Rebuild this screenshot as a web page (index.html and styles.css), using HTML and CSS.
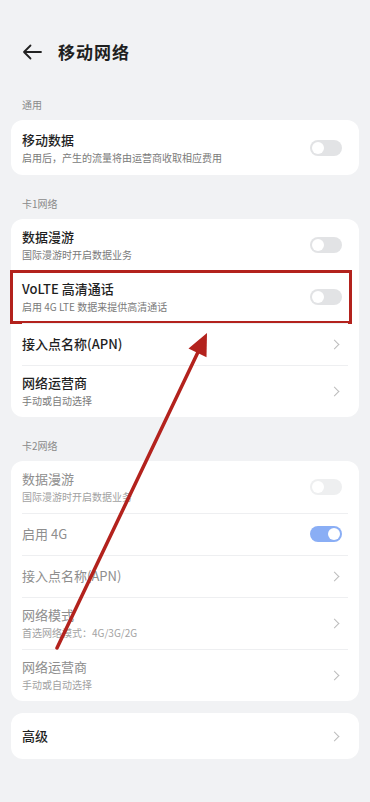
FILE: index.html
```html
<!DOCTYPE html>
<html lang="zh-CN">
<head>
    <meta charset="UTF-8">
    <meta name="viewport" content="width=device-width, initial-scale=1.0">
    <title>移动网络</title>
    <link rel="stylesheet" href="styles.css">
</head>
<body>
    <div class="page">
        <div class="header">
            <svg class="back" width="20" height="16" viewBox="0 0 20 16">
                <path d="M19 8H2M8.5 1.5L2 8l6.5 6.5" fill="none" stroke="#222" stroke-width="1.8" stroke-linecap="round" stroke-linejoin="round"/>
            </svg>
            <h1>移动网络</h1>
        </div>

        <div class="section-label">通用</div>
        <div class="card">
            <div class="row two first">
                <div class="text">
                    <div class="title">移动数据</div>
                    <div class="sub">启用后，产生的流量将由运营商收取相应费用</div>
                </div>
                <div class="switch"></div>
            </div>
        </div>

        <div class="section-label">卡1网络</div>
        <div class="card">
            <div class="row two">
                <div class="text">
                    <div class="title">数据漫游</div>
                    <div class="sub">国际漫游时开启数据业务</div>
                </div>
                <div class="switch"></div>
            </div>
            <div class="row two highlight">
                <div class="text">
                    <div class="title">VoLTE 高清通话</div>
                    <div class="sub">启用 4G LTE 数据来提供高清通话</div>
                </div>
                <div class="switch"></div>
                <div class="mark"></div>
            </div>
            <div class="row">
                <div class="text">
                    <div class="title">接入点名称(APN)</div>
                </div>
                <span class="chevron"></span>
            </div>
            <div class="row two">
                <div class="text">
                    <div class="title">网络运营商</div>
                    <div class="sub">手动或自动选择</div>
                </div>
                <span class="chevron"></span>
            </div>
        </div>

        <div class="section-label">卡2网络</div>
        <div class="card disabled">
            <div class="row two">
                <div class="text">
                    <div class="title">数据漫游</div>
                    <div class="sub">国际漫游时开启数据业务</div>
                </div>
                <div class="switch faint"></div>
            </div>
            <div class="row">
                <div class="text">
                    <div class="title">启用 4G</div>
                </div>
                <div class="switch on"></div>
            </div>
            <div class="row">
                <div class="text">
                    <div class="title">接入点名称(APN)</div>
                </div>
                <span class="chevron"></span>
            </div>
            <div class="row two">
                <div class="text">
                    <div class="title">网络模式</div>
                    <div class="sub">首选网络模式：4G/3G/2G</div>
                </div>
                <span class="chevron"></span>
            </div>
            <div class="row two">
                <div class="text">
                    <div class="title">网络运营商</div>
                    <div class="sub">手动或自动选择</div>
                </div>
                <span class="chevron"></span>
            </div>
        </div>

        <div class="card spaced">
            <div class="row tall">
                <div class="text">
                    <div class="title">高级</div>
                </div>
                <span class="chevron"></span>
            </div>
        </div>

        <!-- 标注箭头 -->
        <svg class="arrow" width="370" height="802" viewBox="0 0 370 802">
            <line x1="57" y1="648" x2="199" y2="350" stroke="#b3221d" stroke-width="3.5" stroke-linecap="round"/>
            <polygon points="207,333 188.5,348.6 206.5,357.2" fill="#b3221d"/>
        </svg>
    </div>
</body>
</html>
```

FILE: styles.css
```css
:root {
    --bg: #f1f2f4;
    --card: #ffffff;
    --text: #1f1f1f;
    --sub: #7a7a7a;
    --line: #eeeff1;
    --blue: #8aaef5;
    --mark: #b3221d;
}

* {
    box-sizing: border-box;
    margin: 0;
    padding: 0;
}

body {
    background: var(--bg);
    font-family: "Noto Sans CJK SC", "Noto Sans", sans-serif;
    color: var(--text);
}

.page {
    position: relative;
    width: 370px;
    min-height: 802px;
    padding-bottom: 20px;
}

/* 顶部标题 */
.header {
    height: 76px;
    display: flex;
    align-items: flex-end;
    padding: 0 22px 10px;
    gap: 16px;
}

.back {
    margin-bottom: 6px;
}

h1 {
    font-size: 17px;
    font-weight: 700;
    line-height: 28px;
    letter-spacing: 1px;
}

.section-label {
    font-size: 10px;
    line-height: 14px;
    color: #8a8a8a;
    padding: 22px 22px 8px;
}

.card {
    background: var(--card);
    border-radius: 12px;
    margin: 0 11px;
}

.card.spaced {
    margin-top: 12px;
}

.row {
    position: relative;
    height: 42px;
    display: flex;
    align-items: center;
    padding: 0 15px 0 11px;
}

.row.two {
    height: 52px;
}

.row.first {
    height: 55px;
}

.row.tall {
    height: 46px;
}

.row + .row::before {
    content: "";
    position: absolute;
    left: 11px;
    right: 11px;
    top: 0;
    border-top: 1px solid var(--line);
}

.text {
    flex: 1;
}

.title {
    font-size: 13px;
    font-weight: 500;
    line-height: 18px;
}

.sub {
    font-size: 10px;
    line-height: 15px;
    color: var(--sub);
    margin-top: 1px;
}

.disabled .title {
    color: #8e8e8e;
    font-weight: 400;
}

.disabled .sub {
    color: #a2a2a2;
}

/* 开关 */
.switch {
    position: relative;
    width: 32px;
    height: 16px;
    border-radius: 8px;
    background: #e2e3e5;
    margin-right: 2px;
}

.switch::after {
    content: "";
    position: absolute;
    left: 2px;
    top: 2px;
    width: 12px;
    height: 12px;
    border-radius: 50%;
    background: #fff;
}

.switch.faint {
    background: #eeeff0;
}

.switch.on {
    background: var(--blue);
}

.switch.on::after {
    left: auto;
    right: 2px;
}

.chevron {
    width: 7px;
    height: 7px;
    border-top: 1.4px solid #bcbcbc;
    border-right: 1.4px solid #bcbcbc;
    transform: rotate(45deg);
    margin-right: 6px;
}

/* 红色标注框 */
.mark {
    position: absolute;
    left: -1px;
    right: 7px;
    top: -1px;
    bottom: -1px;
    border: 3px solid var(--mark);
    pointer-events: none;
}

.arrow {
    position: absolute;
    left: 0;
    top: 0;
    pointer-events: none;
}
```
